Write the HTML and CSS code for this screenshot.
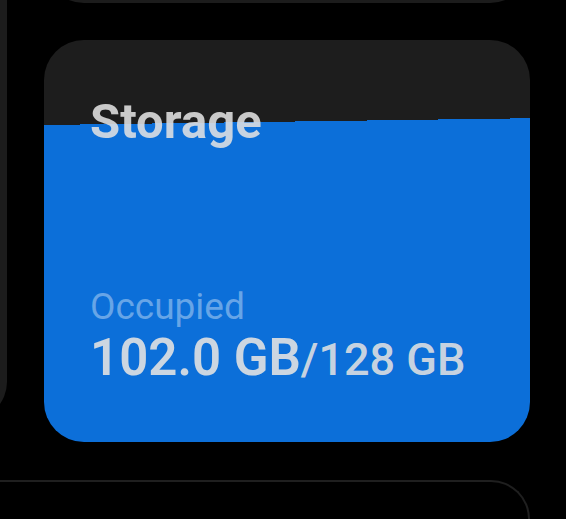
FILE: index.html
```html
<!DOCTYPE html>
<html lang="en">
<head>
  <meta charset="UTF-8">
  <title>Device care – Storage</title>
  <link rel="stylesheet" href="styles.css">
</head>
<body>

<div class="screen">
  <div class="tile-left"></div>

  <div class="col">
    <div class="tile-top"></div>

    <div class="storage-card">
      <h2 class="title">Storage</h2>
      <div class="usage">
        <div class="label">Occupied</div>
        <div class="amount"><span class="used">102.0 GB</span><span class="total">/128 GB</span></div>
      </div>
    </div>
  </div>

  <div class="tile-bottom"></div>
</div>

</body>
</html>
```

FILE: styles.css
```css
html, body { margin: 0; height: 100%; }
body { background: #000; overflow: hidden; font-family: Roboto, "Noto Sans", Arial, sans-serif; }

.screen { display: grid; grid-template-columns: 47px 486px; column-gap: 37px; row-gap: 38px; margin: -100px 0 0 -40px; align-items: start; }

.tile-left { height: 520px; background: #1c1c1c; border-radius: 0 0 38px 0; }

.col { display: flex; flex-direction: column; gap: 37px; }
.tile-top { height: 103px; background: #1c1c1c; border-radius: 40px; }

.storage-card { height: 402px; box-sizing: border-box; padding: 53px 46px 52px; border-radius: 40px; display: flex; flex-direction: column;
  background: linear-gradient(179.2deg, #1d1d1d 85px, #0c6fd9 85px); }

.title { margin: 0; font-size: 49px; line-height: 58px; font-weight: 700; color: rgba(225, 225, 225, 0.88); }

.usage { margin-top: auto; }
.label { font-size: 37px; line-height: 43px; color: rgba(255, 255, 255, 0.38); }
.amount { font-size: 51px; line-height: 60px; font-weight: 600; color: rgba(225, 225, 225, 0.9); }
.total { font-size: 45px; font-weight: 500; }

.tile-bottom { grid-column: 1 / 3; height: 37px; border: 2px solid #1f1f1f; border-bottom: 0; border-radius: 42px 42px 0 0; }
```
